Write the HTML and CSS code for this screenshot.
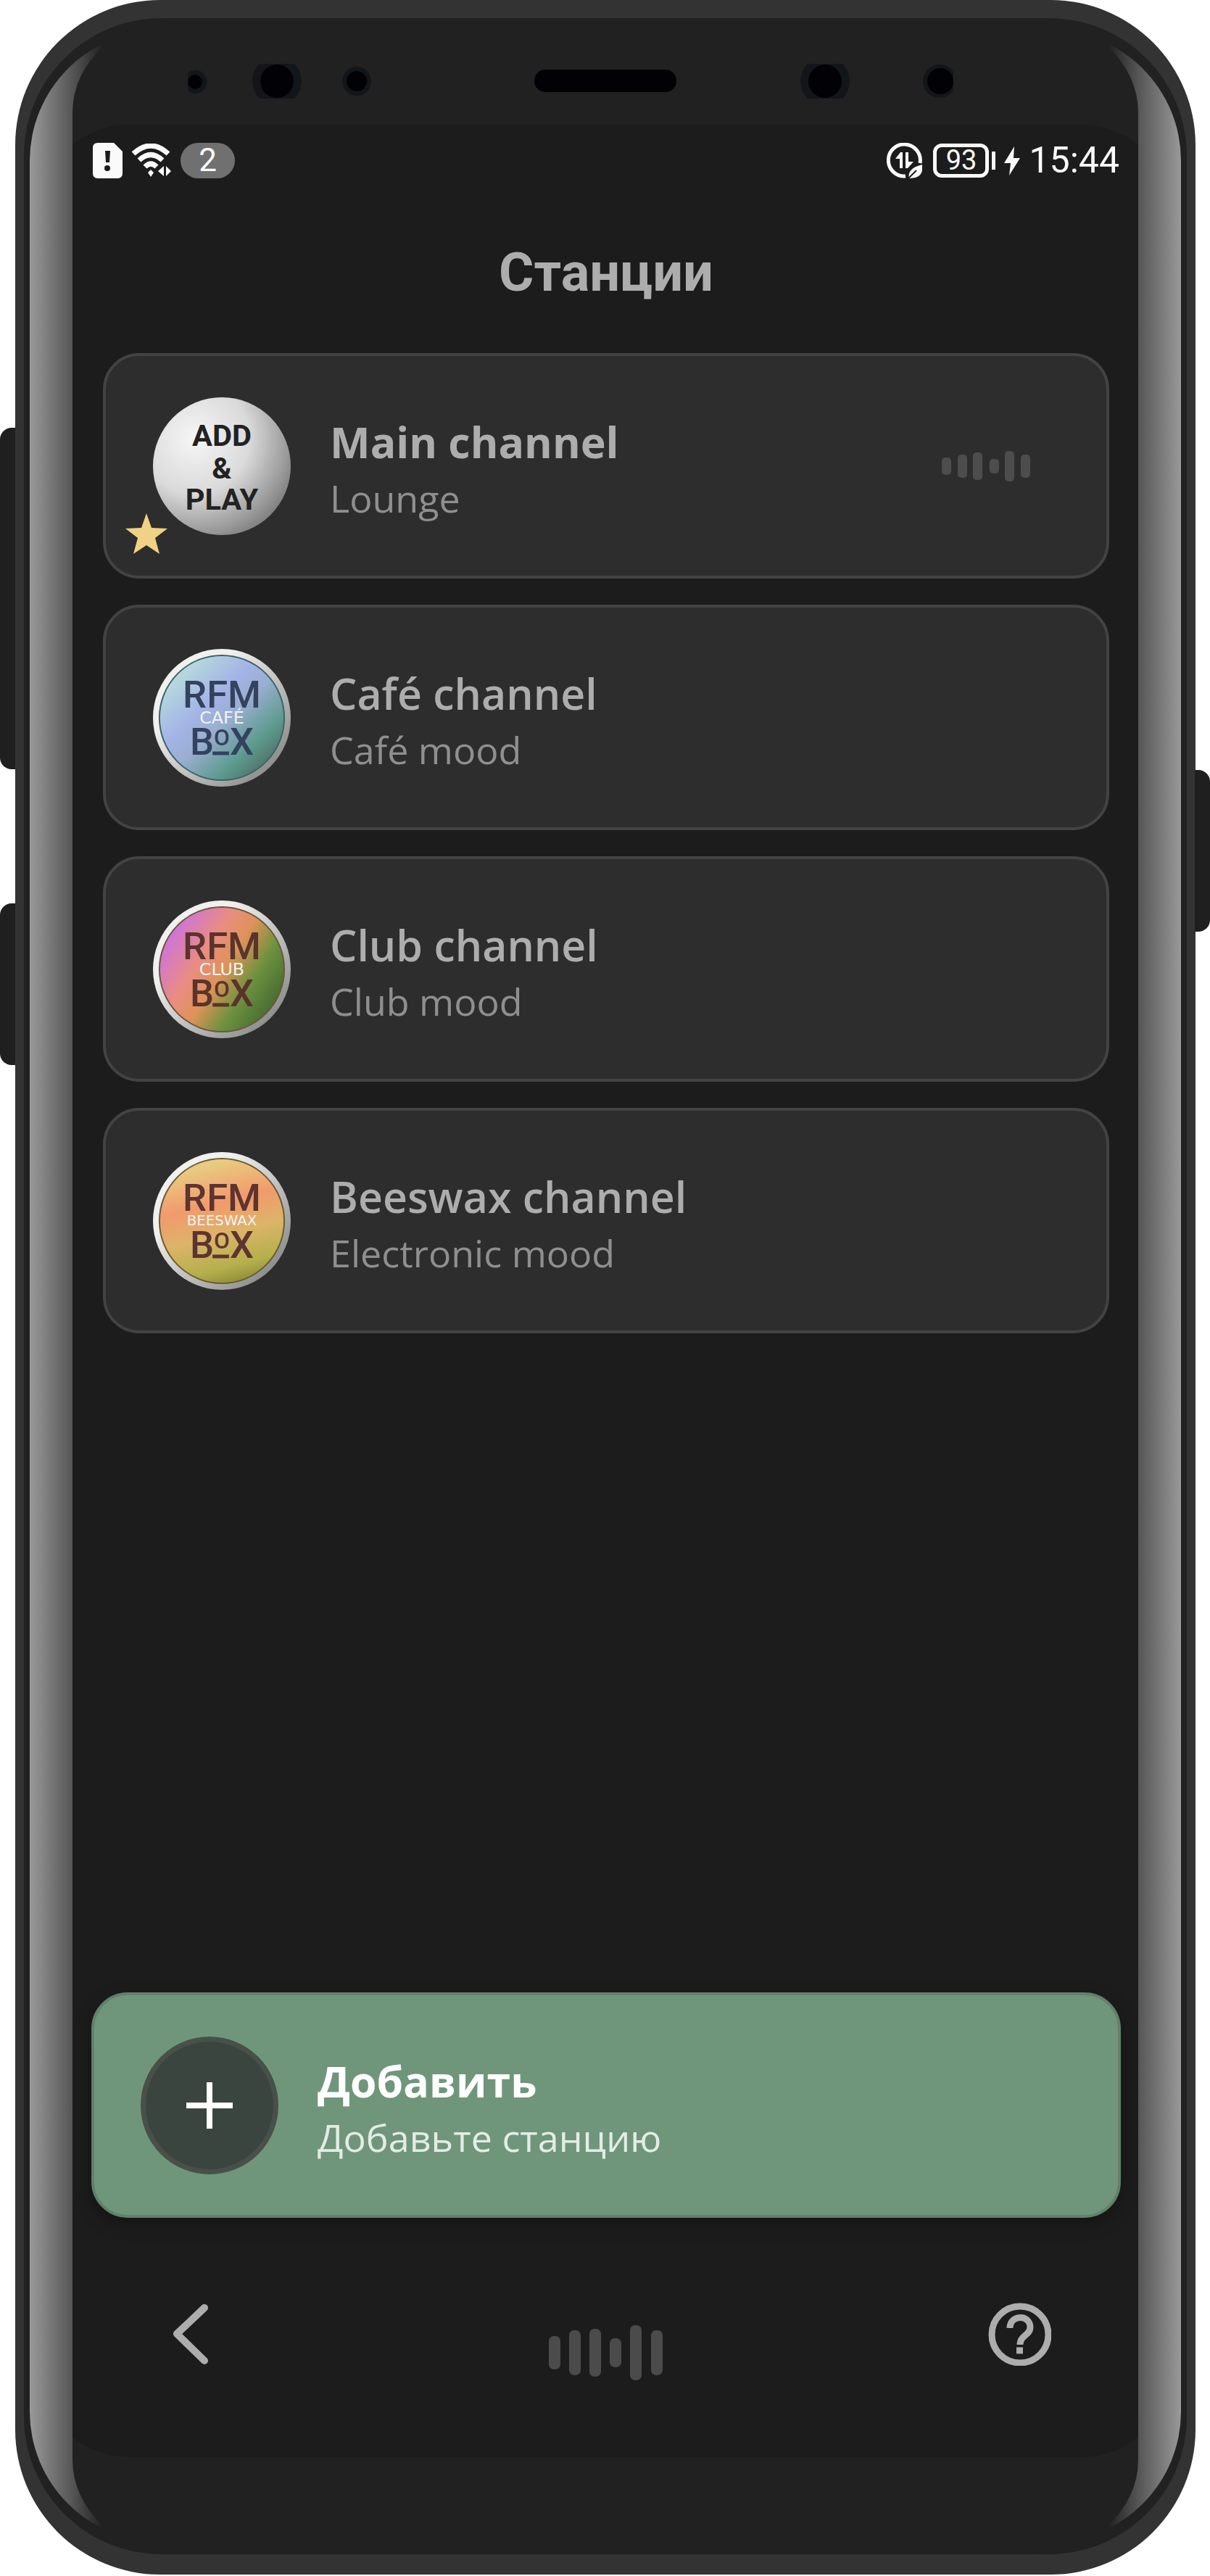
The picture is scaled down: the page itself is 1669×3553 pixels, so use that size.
FILE: index.html
```
<!DOCTYPE html>
<html lang="ru">
<head>
    <meta charset="UTF-8">
    <meta name="viewport" content="width=device-width, initial-scale=1">
    <title>Станции</title>
    <link rel="stylesheet" href="styles.css">
</head>

<body>
    <div class="phone">
        <span class="key key-volume"></span>
        <span class="key key-assistant"></span>
        <span class="key key-power"></span>

        <div class="bezel">
            <div class="face">
                <svg class="sensors" viewBox="100 88 1470 48" aria-hidden="true">
                    <path d="M259 101 A16 16 0 1 1 259 125 Z" fill="#12161b"/>
                    <circle cx="269" cy="113" r="10" fill="#020206"/>
                    <circle cx="382" cy="112" r="34" fill="#12161b"/>
                    <circle cx="382" cy="112" r="23" fill="#020206"/>
                    <circle cx="492" cy="112" r="20" fill="#12161b"/>
                    <circle cx="492" cy="112" r="14" fill="#020206"/>
                    <rect x="737" y="96" width="196" height="31" rx="15" fill="#020206"/>
                    <circle cx="1138" cy="112" r="34" fill="#12161b"/>
                    <circle cx="1138" cy="112" r="23" fill="#020206"/>
                    <path d="M1315 99 A23 23 0 1 0 1315 125 Z" fill="#12161b"/>
                    <circle cx="1297" cy="112" r="18" fill="#020206"/>
                </svg>

                <div class="screen">
                    <div class="status">
                        <div class="status-group">
                            <svg width="41" height="49" viewBox="0 0 41 49">
                                <path d="M7 0 H29 L41 12 V42 Q41 49 34 49 H7 Q0 49 0 42 V7 Q0 0 7 0 Z" fill="#fafafa"/>
                                <path d="M17 11 H24 L23 27 H18 Z" fill="#1c1c1c"/>
                                <circle cx="20" cy="35" r="4" fill="#1c1c1c"/>
                            </svg>
                            <svg class="wifi" width="54" height="47" viewBox="0 0 54 47" fill="none" stroke="#fafafa" stroke-width="7">
                                <path d="M2 14 Q26 -8 50 14"/>
                                <path d="M10 23 Q26 8 42 23"/>
                                <path d="M18 32 Q26 24 34 32"/>
                                <path d="M22 40 L26 36 L30 40 L26 46 Z" fill="#fafafa" stroke="none"/>
                                <path d="M44 31 V45 L36 38 Z M47 31 V45 L54 38 Z" fill="#fafafa" stroke="none"/>
                            </svg>
                            <span class="badge">2</span>
                        </div>
                        <div class="status-group">
                            <svg class="saver" width="49" height="49" viewBox="0 0 49 49">
                                <path d="M46 28 A22 22 0 1 0 26 46" fill="none" stroke="#fafafa" stroke-width="5"/>
                                <path d="M12 22 L19 13 H22 V35 H18 V22 Z M26 13 H30 V26 H37 L29 35 H26 Z" fill="#fafafa"/>
                                <path d="M49 30 V38 Q47 49 31 49 Q28 35 49 30 Z" fill="#fafafa"/>
                                <path d="M30 49 L41 38" stroke="#1c1c1c" stroke-width="2"/>
                            </svg>
                            <span class="battery">93</span>
                            <svg class="bolt" width="22" height="40" viewBox="0 0 22 40">
                                <path d="M14 0 L0 23 H9 L7 40 L22 16 H13 Z" fill="#fafafa"/>
                            </svg>
                            <span class="time">15:44</span>
                        </div>
                    </div>

                    <h1 class="title">Станции</h1>

                    <ul class="stations">
                        <li>
                            <a class="card" href="#main">
                                <svg class="logo" viewBox="0 0 192 192">
                                    <defs>
                                        <radialGradient id="silver" cx="0.3" cy="0.3" r="0.8">
                                            <stop offset="0" stop-color="#f6f6f6"/>
                                            <stop offset="0.5" stop-color="#dadada"/>
                                            <stop offset="0.85" stop-color="#9a9a9a"/>
                                            <stop offset="1" stop-color="#7c7c7c"/>
                                        </radialGradient>
                                        <linearGradient id="ring" x1="0" y1="0" x2="1" y2="1">
                                            <stop offset="0.3" stop-color="#f0f0ee"/>
                                            <stop offset="0.85" stop-color="#8f918f"/>
                                        </linearGradient>
                                    </defs>
                                    <circle cx="96" cy="96" r="96" fill="url(#silver)"/>
                                    <g class="logo-add">
                                        <text x="96" y="68">ADD</text>
                                        <text x="96" y="113">&amp;</text>
                                        <text x="96" y="157">PLAY</text>
                                    </g>
                                </svg>
                                <span class="text">
                                    <strong class="name current">Main channel</strong>
                                    <span class="mood">Lounge</span>
                                </span>
                                <svg class="bars" width="122" height="42" viewBox="0 0 122 42" fill="#4d4d4d">
                                    <rect x="0" y="9" width="13" height="24" rx="5"/>
                                    <rect x="22" y="5" width="13" height="32" rx="5"/>
                                    <rect x="43" y="2" width="13" height="38" rx="5"/>
                                    <rect x="66" y="11" width="13" height="20" rx="5"/>
                                    <rect x="87" y="0" width="13" height="42" rx="5"/>
                                    <rect x="109" y="5" width="13" height="32" rx="5"/>
                                </svg>
                                <svg class="star" width="58" height="56" viewBox="0 0 58 56">
                                    <path d="M29 0 L36 20 L58 21 L41 34 L47 56 L29 44 L11 56 L17 34 L0 21 L22 20 Z" fill="#efd283"/>
                                </svg>
                            </a>
                        </li>
                        <li>
                            <a class="card" href="#cafe">
                                <svg class="logo" viewBox="0 0 192 192">
                                    <defs>
                                        <linearGradient id="cafe" x1="0.1" y1="0.05" x2="0.85" y2="0.85">
                                            <stop offset="0.05" stop-color="#b9e0dc"/>
                                            <stop offset="0.4" stop-color="#a4b4e6"/>
                                            <stop offset="0.58" stop-color="#9aaed2"/>
                                            <stop offset="0.85" stop-color="#5c9b8d"/>
                                            <stop offset="1" stop-color="#54796f"/>
                                        </linearGradient>
                                    </defs>
                                    <circle cx="96" cy="96" r="96" fill="url(#ring)"/>
                                    <circle cx="96" cy="96" r="87" fill="url(#cafe)" stroke="#3c6468" stroke-width="2"/>
                                    <g class="logo-rfm" fill="#33425f">
                                        <text x="96" y="82">RFM</text>
                                        <text x="96" y="148">B<tspan class="small-o" dy="-14">O</tspan><tspan dy="14">X</tspan></text>
                                        <rect x="83" y="143" width="23" height="5"/>
                                    </g>
                                    <text class="logo-tag" x="96" y="104">CAFÉ</text>
                                </svg>
                                <span class="text">
                                    <strong class="name">Café channel</strong>
                                    <span class="mood">Café mood</span>
                                </span>
                            </a>
                        </li>
                        <li>
                            <a class="card" href="#club">
                                <svg class="logo" viewBox="0 0 192 192">
                                    <defs>
                                        <linearGradient id="club" x1="0.05" y1="0.2" x2="0.9" y2="0.75">
                                            <stop offset="0.05" stop-color="#cf74d6"/>
                                            <stop offset="0.35" stop-color="#ea8d80"/>
                                            <stop offset="0.55" stop-color="#dd9358"/>
                                            <stop offset="0.78" stop-color="#6e923f"/>
                                            <stop offset="1" stop-color="#4d7233"/>
                                        </linearGradient>
                                    </defs>
                                    <circle cx="96" cy="96" r="96" fill="url(#ring)"/>
                                    <circle cx="96" cy="96" r="87" fill="url(#club)" stroke="#6d5540" stroke-width="2"/>
                                    <g class="logo-rfm" fill="#5a342c">
                                        <text x="96" y="82">RFM</text>
                                        <text x="96" y="148">B<tspan class="small-o" dy="-14">O</tspan><tspan dy="14">X</tspan></text>
                                        <rect x="83" y="143" width="23" height="5"/>
                                    </g>
                                    <text class="logo-tag" x="96" y="104">CLUB</text>
                                </svg>
                                <span class="text">
                                    <strong class="name">Club channel</strong>
                                    <span class="mood">Club mood</span>
                                </span>
                            </a>
                        </li>
                        <li>
                            <a class="card" href="#beeswax">
                                <svg class="logo" viewBox="0 0 192 192">
                                    <defs>
                                        <linearGradient id="beeswax" x1="0.4" y1="0" x2="0.65" y2="1">
                                            <stop offset="0.05" stop-color="#e8cb80"/>
                                            <stop offset="0.35" stop-color="#f29a6c"/>
                                            <stop offset="0.6" stop-color="#dcb468"/>
                                            <stop offset="0.85" stop-color="#b5b04c"/>
                                            <stop offset="1" stop-color="#8e8a38"/>
                                        </linearGradient>
                                    </defs>
                                    <circle cx="96" cy="96" r="96" fill="url(#ring)"/>
                                    <circle cx="96" cy="96" r="87" fill="url(#beeswax)" stroke="#6b5a35" stroke-width="2"/>
                                    <g class="logo-rfm" fill="#5e3431">
                                        <text x="96" y="82">RFM</text>
                                        <text x="96" y="148">B<tspan class="small-o" dy="-14">O</tspan><tspan dy="14">X</tspan></text>
                                        <rect x="83" y="143" width="23" height="5"/>
                                    </g>
                                    <text class="logo-tag long" x="96" y="102">BEESWAX</text>
                                </svg>
                                <span class="text">
                                    <strong class="name">Beeswax channel</strong>
                                    <span class="mood">Electronic mood</span>
                                </span>
                            </a>
                        </li>
                    </ul>

                    <button class="card add" type="button">
                        <span class="plus">
                            <svg width="64" height="64" viewBox="0 0 64 64" stroke="#fff" stroke-width="8">
                                <path d="M32 0 V64 M0 32 H64"/>
                            </svg>
                        </span>
                        <span class="text">
                            <strong class="name">Добавить</strong>
                            <span class="mood">Добавьте станцию</span>
                        </span>
                    </button>

                    <nav class="nav">
                        <button class="nav-btn" type="button" aria-label="Назад">
                            <svg width="87" height="87" viewBox="0 0 87 87" fill="none" stroke="#adadad" stroke-width="10" stroke-linecap="round" stroke-linejoin="round">
                                <path d="M60 7 L22 43 L60 80"/>
                            </svg>
                        </button>
                        <svg class="nav-bars" width="158" height="76" viewBox="0 0 158 76" fill="#4b4b4b">
                            <rect x="0" y="15" width="16" height="46" rx="7"/>
                            <rect x="28" y="7" width="16" height="62" rx="7"/>
                            <rect x="56" y="5" width="16" height="66" rx="7"/>
                            <rect x="84" y="18" width="16" height="40" rx="7"/>
                            <rect x="112" y="0" width="16" height="76" rx="7"/>
                            <rect x="141" y="7" width="16" height="62" rx="7"/>
                        </svg>
                        <button class="nav-btn" type="button" aria-label="Помощь">
                            <svg width="87" height="87" viewBox="0 0 87 87" fill="none" stroke="#adadad" stroke-width="9">
                                <circle cx="44" cy="44" r="39"/>
                                <path d="M30 35 C30 16 58 16 58 34 C58 45 44 45 44 58"/>
                                <path d="M39 66 H48"/>
                            </svg>
                        </button>
                    </nav>
                </div>
            </div>
        </div>
    </div>
</body>
</html>
```
FILE: styles.css
```
* {
    margin: 0;
    padding: 0;
    box-sizing: border-box;
}

body {
    background: #fff;
    font-family: "Open Sans", "Noto Sans", sans-serif;
    color: #adadad;
}

svg {
    display: block;
    flex: none;
}

/* phone body */
.phone {
    position: relative;
    display: flex;
    min-height: calc(100vh - 2px);
    margin: 0 20px 0 21px;
    padding: 25px 12px 28px;
    background: #333;
    border-radius: 200px;
}

.key {
    position: absolute;
    width: 21px;
    background: #1f1f1f;
}

.key-volume {
    left: -21px;
    top: 590px;
    height: 471px;
    border-radius: 16px 0 0 16px;
}

.key-assistant {
    left: -21px;
    top: 1246px;
    height: 223px;
    border-radius: 16px 0 0 16px;
}

.key-power {
    right: -20px;
    top: 1062px;
    height: 223px;
    border-radius: 0 16px 16px 0;
}

.bezel {
    position: relative;
    flex: 1;
    display: flex;
    padding: 0 67px;
    background: #212121;
    border-radius: 190px;
}

/* light on the curved glass edges */
.bezel::before {
    content: "";
    position: absolute;
    inset: 17px 8px;
    border-radius: 180px;
    background:
        linear-gradient(to right, #999, #555 59px, #212121 100px, transparent 100px),
        linear-gradient(to left, #999, #555 59px, #212121 100px);
}

.face {
    position: relative;
    flex: 1;
    display: flex;
    flex-direction: column;
    padding: 63px 0 134px;
    background: #212121;
    border-radius: 150px / 130px;
    overflow: hidden;
}

.sensors {
    width: 100%;
    margin-bottom: 36px;
}

.screen {
    flex: 1;
    display: flex;
    flex-direction: column;
    margin: 0 -43px;
    padding: 25px 67px 106px 69px;
    background: #1c1c1c;
    border-radius: 120px;
}

/* status bar */
.status {
    display: flex;
    justify-content: space-between;
    height: 49px;
    padding: 0 2px;
    color: #fafafa;
    font-family: Roboto, sans-serif;
}

.status-group {
    display: flex;
    align-items: center;
}

.wifi {
    margin: 0 13px;
}

.badge {
    width: 75px;
    border-radius: 25px;
    background: #707070;
    font-size: 44px;
    line-height: 49px;
    text-align: center;
}

.saver {
    margin-right: 15px;
}

.battery {
    position: relative;
    width: 77px;
    border: 5px solid #fafafa;
    border-radius: 12px;
    font-size: 38px;
    line-height: 37px;
    text-align: center;
}

.battery::after {
    content: "";
    position: absolute;
    right: -14px;
    top: 6px;
    width: 5px;
    height: 25px;
    background: #fafafa;
}

.bolt {
    margin: 0 12px 0 21px;
}

.time {
    font-size: 50px;
    line-height: 49px;
}

.title {
    margin: 80px 0 61px;
    font-family: Roboto, sans-serif;
    font-size: 74px;
    font-weight: 700;
    line-height: 100px;
    text-align: center;
}

/* station list */
.stations {
    display: flex;
    flex-direction: column;
    gap: 36px;
    padding: 0 16px;
    list-style: none;
}

.card {
    position: relative;
    display: flex;
    align-items: center;
    gap: 54px;
    width: 100%;
    height: 311px;
    padding: 0 105px 0 65px;
    background: #2d2d2d;
    border: 4px solid #434343;
    border-radius: 50px;
    color: #adadad;
    font-family: inherit;
    text-align: left;
    text-decoration: none;
}

.logo {
    width: 190px;
    height: 190px;
}

.logo-add {
    fill: #222;
    font-family: Roboto, sans-serif;
    font-size: 42px;
    font-weight: 700;
    text-anchor: middle;
}

.logo-rfm {
    font-family: Roboto, sans-serif;
    font-size: 53px;
    font-weight: 500;
    text-anchor: middle;
}

.small-o {
    font-size: 32px;
}

.logo-tag {
    fill: #f2f2f2;
    font-family: "DejaVu Sans", sans-serif;
    font-size: 24px;
    text-anchor: middle;
}

.logo-tag.long {
    font-size: 20px;
}

.text {
    flex: 1;
    display: flex;
    flex-direction: column;
    padding-top: 8px;
}

.name {
    font-size: 59px;
    font-weight: 600;
    line-height: 80px;
}

.name.current {
    font-weight: 700;
}

.mood {
    color: #8f8f8f;
    font-size: 52px;
    line-height: 76px;
}

.star {
    position: absolute;
    left: 27px;
    bottom: 30px;
}

.add {
    margin-top: auto;
    padding: 0 64px;
    background: #6f967a;
    border-color: #62806b;
    color: #fff;
    box-shadow: 0 8px 24px rgba(0, 0, 0, 0.3);
    cursor: pointer;
}

.add .name {
    font-weight: 700;
}

.add .mood {
    color: #e3ece5;
}

.plus {
    display: flex;
    align-items: center;
    justify-content: center;
    width: 190px;
    height: 190px;
    border: 7px solid #485049;
    border-radius: 50%;
    background: #3b453f;
}

/* bottom navigation */
.nav {
    display: flex;
    justify-content: space-between;
    height: 107px;
    margin-top: 117px;
    padding: 0 96px;
}

.nav-btn {
    width: 87px;
    height: 87px;
    border: none;
    background: none;
    cursor: pointer;
}

.nav-bars {
    align-self: flex-end;
}
```
